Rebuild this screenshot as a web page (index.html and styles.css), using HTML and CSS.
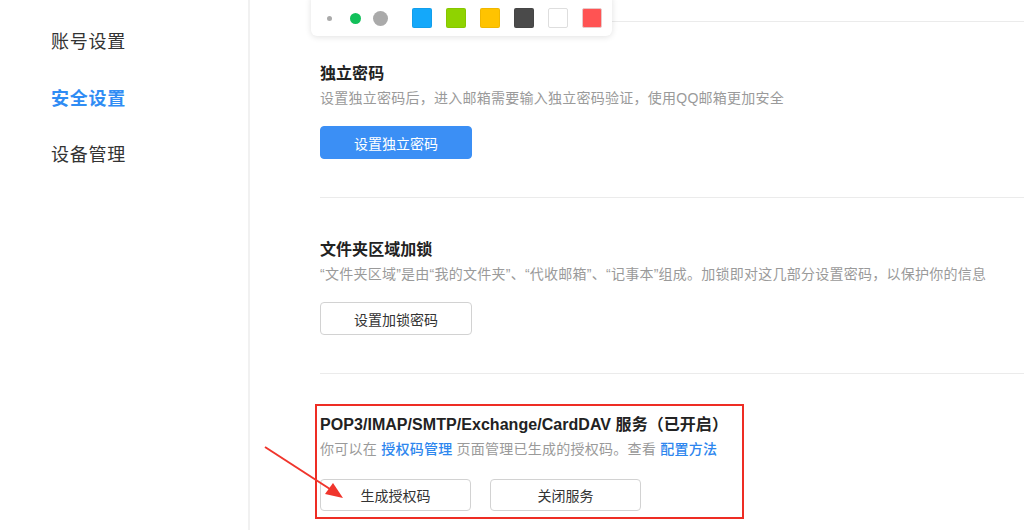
FILE: index.html
```html
<!DOCTYPE html>
<html lang="zh-CN">
<head>
  <meta charset="utf-8" />
  <meta name="viewport" content="width=device-width, initial-scale=1" />
  <title>安全设置</title>
  <link rel="stylesheet" href="styles.css">
</head>

<body>
  <div class="sidebar">
    <div class="nav-item">账号设置</div>
    <div class="nav-item active">安全设置</div>
    <div class="nav-item">设备管理</div>
  </div>

  <div class="main">
    <div class="stub"></div>

    <div class="section">
      <div class="sec-title">独立密码</div>
      <div class="sec-desc">设置独立密码后，进入邮箱需要输入独立密码验证，使用QQ邮箱更加安全</div>
      <div class="actions">
        <button class="btn primary">设置独立密码</button>
      </div>
    </div>

    <div class="section">
      <div class="sec-title">文件夹区域加锁</div>
      <div class="sec-desc">“文件夹区域”是由“我的文件夹”、“代收邮箱”、“记事本”组成。加锁即对这几部分设置密码，以保护你的信息</div>
      <div class="actions">
        <button class="btn">设置加锁密码</button>
      </div>
    </div>

    <div class="section last">
      <div class="highlight">
        <div class="sec-title">POP3/IMAP/SMTP/Exchange/CardDAV 服务（已开启）</div>
        <div class="sec-desc">你可以在 <a class="link">授权码管理</a> 页面管理已生成的授权码。查看 <a class="link">配置方法</a></div>
        <div class="actions wide">
          <button class="btn">生成授权码</button>
          <button class="btn">关闭服务</button>
        </div>
      </div>
    </div>
  </div>

  <!-- colour picker toolbar floating over the page -->
  <div class="palette">
    <span class="dot dot-s"></span>
    <span class="dot dot-m"></span>
    <span class="dot dot-l"></span>
    <span class="swatch sw-blue"></span>
    <span class="swatch sw-green"></span>
    <span class="swatch sw-yellow"></span>
    <span class="swatch sw-dark"></span>
    <span class="swatch sw-white"></span>
    <span class="swatch sw-red"></span>
  </div>

  <!-- annotation arrow -->
  <svg class="arrow" width="90" height="60" viewBox="0 0 90 60">
    <line x1="2" y1="2" x2="70" y2="46" stroke="#f0352c" stroke-width="2" />
    <polygon points="80,53 62,49 70,38" fill="#f0352c" />
  </svg>
</body>
</html>
```

FILE: styles.css
```css
body {
  margin: 0;
  padding: 0;
  height: 530px;
  overflow: hidden;
  display: flex;
  background: #fff;
  font-family: "Liberation Sans", "Noto Sans CJK SC", sans-serif;
  color: #333;
}

.sidebar {
  width: 248px;
  border-right: 2px solid #f1f1f1;
  padding-top: 14px;
  box-sizing: content-box;
}

.nav-item {
  height: 56.5px;
  line-height: 56px;
  padding-left: 51px;
  font-size: 18px;
  letter-spacing: 0.75px;
  color: #333;
}

.nav-item.active {
  color: #2f8cf4;
  font-weight: 700;
}

.main {
  flex: 1;
  padding-left: 70px;
}

.stub {
  height: 21px;
}

.section {
  border-top: 1px solid #ebebeb;
  padding: 39px 0 38px;
}

.section.last {
  padding: 30px 0 0;
}

.sec-title {
  padding-top: 1px;
  font-size: 16px;
  line-height: 24px;
  font-weight: 700;
  letter-spacing: 0.05px;
  color: #222;
}

.sec-desc {
  margin-top: 1px;
  font-size: 14px;
  line-height: 22px;
  letter-spacing: 0.25px;
  color: #9a9a9a;
}

.link {
  color: #2d86ee;
  font-weight: 500;
}

.actions {
  margin-top: 17px;
  display: flex;
  gap: 19px;
}

.actions.wide {
  margin-top: 19px;
}

.btn {
  width: 152px;
  height: 33px;
  padding: 0;
  border: 1px solid #d2d2d2;
  border-radius: 4px;
  background: #fff;
  font-family: inherit;
  font-size: 14px;
  color: #333;
}

.btn.primary {
  background: #3b8ff5;
  border-color: #3b8ff5;
  color: #fff;
}

.actions.wide .btn {
  height: 32px;
  width: 151px;
}

.highlight {
  width: 429px;
  box-sizing: border-box;
  margin-left: -5px;
  padding: 6px 0 6px 3px;
  border: 2px solid #ee2d24;
}

.palette {
  position: absolute;
  left: 311px;
  top: -6px;
  width: 301px;
  height: 42px;
  box-sizing: border-box;
  padding-top: 6px;
  display: flex;
  align-items: center;
  background: #fff;
  border-radius: 6px;
  box-shadow: 0 1px 6px rgba(0, 0, 0, 0.12);
}

.dot {
  border-radius: 50%;
  background: #aaa;
  flex: none;
}

.dot-s {
  width: 5px;
  height: 5px;
  margin-left: 16px;
}

.dot-m {
  width: 11px;
  height: 11px;
  margin-left: 18px;
  background: #12c05a;
}

.dot-l {
  width: 15px;
  height: 15px;
  margin-left: 12px;
  margin-right: 24px;
}

.swatch {
  width: 20px;
  height: 20px;
  margin-left: 14px;
  box-sizing: border-box;
  border: 1px solid rgba(0, 0, 0, 0.06);
  border-radius: 2px;
  flex: none;
}

.swatch.sw-blue { background: #14a8fa; margin-left: 0; }
.swatch.sw-green { background: #8fd300; }
.swatch.sw-yellow { background: #ffc300; }
.swatch.sw-dark { background: #4a4a4a; }
.swatch.sw-white { background: #fff; border-color: #dedede; }
.swatch.sw-red { background: #ff5353; border-color: #e8c8c8; }

.arrow {
  position: absolute;
  left: 263px;
  top: 445px;
}
```
